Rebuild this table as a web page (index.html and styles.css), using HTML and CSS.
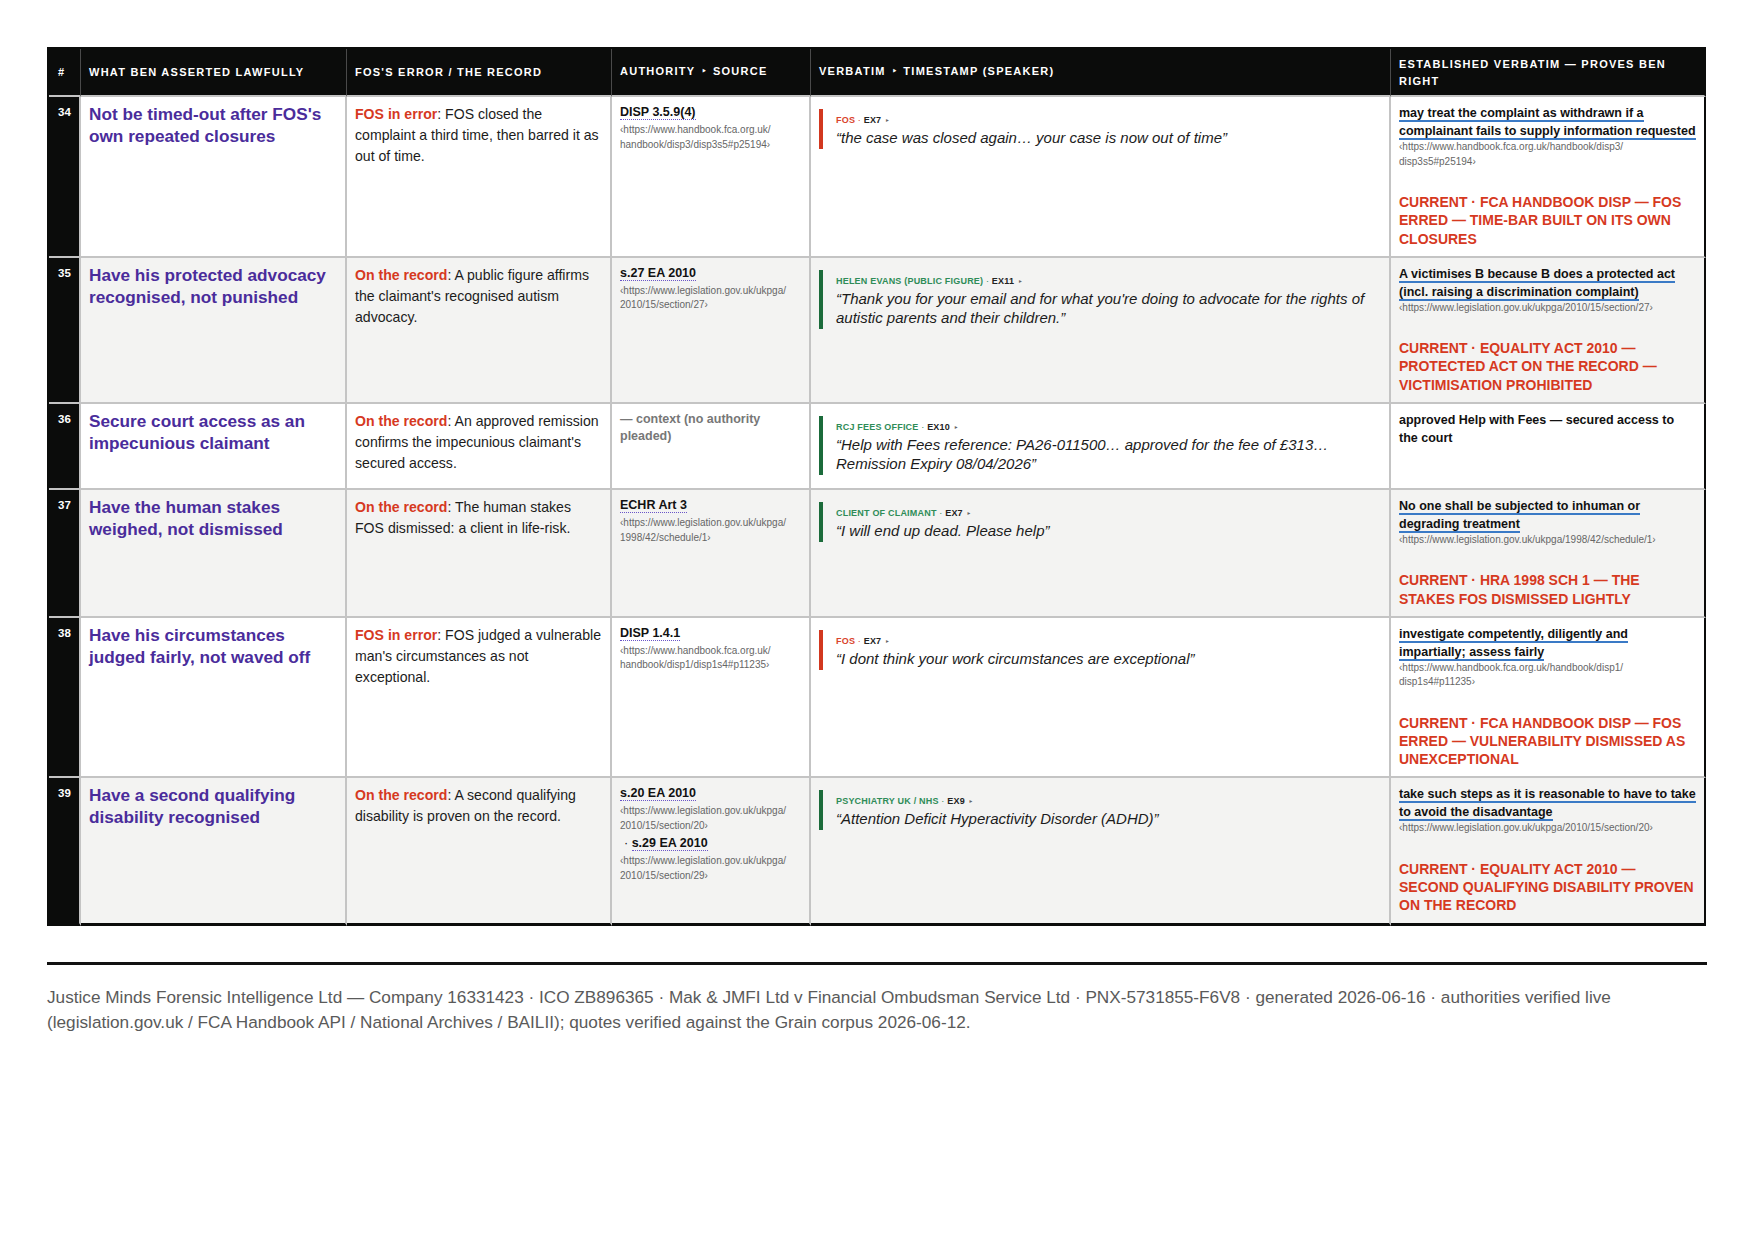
FILE: index.html
```html
<!DOCTYPE html>
<html lang="en">
<head>
<meta charset="utf-8">
<title>Established verbatim</title>
<link rel="stylesheet" href="styles.css">
</head>
<body>
<div class="page">
  <table class="sheet">
    <colgroup>
      <col class="c-num"><col class="c-claim"><col class="c-rec"><col class="c-auth"><col class="c-verb"><col class="c-est">
    </colgroup>
    <thead>
      <tr>
        <th class="h">#</th>
        <th class="h">What Ben asserted lawfully</th>
        <th class="h">FOS's error / the record</th>
        <th class="h">Authority <span class="tri">‣</span> Source</th>
        <th class="h">Verbatim <span class="tri">‣</span> Timestamp (speaker)</th>
        <th class="h">Established verbatim — proves Ben right</th>
      </tr>
    </thead>
    <tbody>
      <tr>
        <td class="num">34</td>
        <td class="claim">Not be timed-out after FOS's own repeated closures</td>
        <td class="rec"><span class="tag">FOS in error</span>: FOS closed the complaint a third time, then barred it as out of time.</td>
        <td class="auth">
          <div class="cite"><span class="cite-link">DISP 3.5.9(4)</span></div>
          <div class="cite-url">‹https://www.handbook.fca.org.uk/<br>handbook/disp3/disp3s5#p25194›</div>
        </td>
        <td class="verb">
          <div class="vb vb-red">
            <div class="vb-label"><span class="spk">FOS</span><span class="sep"> · </span><span class="ex">EX7</span> <span class="arr">‣</span></div>
            <div class="vb-q">“the case was closed again… your case is now out of time”</div>
          </div>
        </td>
        <td class="est">
          <span class="clause">may treat the complaint as withdrawn if a complainant fails to supply information requested</span>
          <div class="est-url">‹https://www.handbook.fca.org.uk/handbook/disp3/<br>disp3s5#p25194›</div>
          <div class="verdict">Current · FCA Handbook DISP — FOS erred — time-bar built on its own closures</div>
        </td>
      </tr>
      <tr>
        <td class="num">35</td>
        <td class="claim">Have his protected advocacy recognised, not punished</td>
        <td class="rec"><span class="tag">On the record</span>: A public figure affirms the claimant's recognised autism advocacy.</td>
        <td class="auth">
          <div class="cite"><span class="cite-link">s.27 EA 2010</span></div>
          <div class="cite-url">‹https://www.legislation.gov.uk/ukpga/<br>2010/15/section/27›</div>
        </td>
        <td class="verb">
          <div class="vb vb-green">
            <div class="vb-label"><span class="spk">Helen Evans (public figure)</span><span class="sep"> · </span><span class="ex">EX11</span> <span class="arr">‣</span></div>
            <div class="vb-q">“Thank you for your email and for what you're doing to advocate for the rights of autistic parents and their children.”</div>
          </div>
        </td>
        <td class="est">
          <span class="clause">A victimises B because B does a protected act (incl. raising a discrimination complaint)</span>
          <div class="est-url">‹https://www.legislation.gov.uk/ukpga/2010/15/section/27›</div>
          <div class="verdict">Current · Equality Act 2010 — protected act on the record — victimisation prohibited</div>
        </td>
      </tr>
      <tr>
        <td class="num">36</td>
        <td class="claim">Secure court access as an impecunious claimant</td>
        <td class="rec"><span class="tag">On the record</span>: An approved remission confirms the impecunious claimant's secured access.</td>
        <td class="auth">
          <div class="cite-none">— context (no authority pleaded)</div>
        </td>
        <td class="verb">
          <div class="vb vb-green">
            <div class="vb-label"><span class="spk">RCJ Fees Office</span><span class="sep"> · </span><span class="ex">EX10</span> <span class="arr">‣</span></div>
            <div class="vb-q">“Help with Fees reference: PA26-011500… approved for the fee of £313… Remission Expiry 08/04/2026”</div>
          </div>
        </td>
        <td class="est">
          <span class="clause clause-plain">approved Help with Fees — secured access to the court</span>
        </td>
      </tr>
      <tr>
        <td class="num">37</td>
        <td class="claim">Have the human stakes weighed, not dismissed</td>
        <td class="rec"><span class="tag">On the record</span>: The human stakes FOS dismissed: a client in life-risk.</td>
        <td class="auth">
          <div class="cite"><span class="cite-link">ECHR Art 3</span></div>
          <div class="cite-url">‹https://www.legislation.gov.uk/ukpga/<br>1998/42/schedule/1›</div>
        </td>
        <td class="verb">
          <div class="vb vb-green">
            <div class="vb-label"><span class="spk">Client of claimant</span><span class="sep"> · </span><span class="ex">EX7</span> <span class="arr">‣</span></div>
            <div class="vb-q">“I will end up dead. Please help”</div>
          </div>
        </td>
        <td class="est">
          <span class="clause">No one shall be subjected to inhuman or degrading treatment</span>
          <div class="est-url">‹https://www.legislation.gov.uk/ukpga/1998/42/schedule/1›</div>
          <div class="verdict">Current · HRA 1998 Sch 1 — the stakes FOS dismissed lightly</div>
        </td>
      </tr>
      <tr>
        <td class="num">38</td>
        <td class="claim">Have his circumstances judged fairly, not waved off</td>
        <td class="rec"><span class="tag">FOS in error</span>: FOS judged a vulnerable man's circumstances as not exceptional.</td>
        <td class="auth">
          <div class="cite"><span class="cite-link">DISP 1.4.1</span></div>
          <div class="cite-url">‹https://www.handbook.fca.org.uk/<br>handbook/disp1/disp1s4#p11235›</div>
        </td>
        <td class="verb">
          <div class="vb vb-red">
            <div class="vb-label"><span class="spk">FOS</span><span class="sep"> · </span><span class="ex">EX7</span> <span class="arr">‣</span></div>
            <div class="vb-q">“I dont think your work circumstances are exceptional”</div>
          </div>
        </td>
        <td class="est">
          <span class="clause">investigate competently, diligently and impartially; assess fairly</span>
          <div class="est-url">‹https://www.handbook.fca.org.uk/handbook/disp1/<br>disp1s4#p11235›</div>
          <div class="verdict">Current · FCA Handbook DISP — FOS erred — vulnerability dismissed as unexceptional</div>
        </td>
      </tr>
      <tr>
        <td class="num">39</td>
        <td class="claim">Have a second qualifying disability recognised</td>
        <td class="rec"><span class="tag">On the record</span>: A second qualifying disability is proven on the record.</td>
        <td class="auth">
          <div class="cite"><span class="cite-link">s.20 EA 2010</span></div>
          <div class="cite-url">‹https://www.legislation.gov.uk/ukpga/<br>2010/15/section/20›</div>
          <div class="cite cite-more">· <span class="cite-link">s.29 EA 2010</span></div>
          <div class="cite-url">‹https://www.legislation.gov.uk/ukpga/<br>2010/15/section/29›</div>
        </td>
        <td class="verb">
          <div class="vb vb-green">
            <div class="vb-label"><span class="spk">Psychiatry UK / NHS</span><span class="sep"> · </span><span class="ex">EX9</span> <span class="arr">‣</span></div>
            <div class="vb-q">“Attention Deficit Hyperactivity Disorder (ADHD)”</div>
          </div>
        </td>
        <td class="est">
          <span class="clause">take such steps as it is reasonable to have to take to avoid the disadvantage</span>
          <div class="est-url">‹https://www.legislation.gov.uk/ukpga/2010/15/section/20›</div>
          <div class="verdict">Current · Equality Act 2010 — second qualifying disability proven on the record</div>
        </td>
      </tr>
    </tbody>
  </table>

  <footer class="foot">Justice Minds Forensic Intelligence Ltd — Company 16331423 · ICO ZB896365 · Mak &amp; JMFI Ltd v Financial Ombudsman Service Ltd · PNX-5731855-F6V8 · generated 2026-06-16 · authorities verified live (legislation.gov.uk / FCA Handbook API / National Archives / BAILII); quotes verified against the Grain corpus 2026-06-12.</footer>
</div>
</body>
</html>
```
FILE: styles.css
```css
* { box-sizing: border-box; }

html, body {
  margin: 0;
  padding: 0;
  background: #ffffff;
}

body {
  font-family: "Liberation Sans", Arial, sans-serif;
  color: #1c1c1c;
}

.page {
  width: 1754px;
  padding: 47px 47px 0 47px;
}

/* ---------- table ---------- */
.sheet {
  width: 1659px;
  table-layout: fixed;
  border-collapse: separate;
  border-spacing: 0;
  border-top: 2px solid #0b0c0b;
  border-left: 2px solid #0b0c0b;
}

.c-num { width: 32px; }
.c-claim { width: 266px; }
.c-rec { width: 265px; }
.c-auth { width: 199px; }
.c-verb { width: 580px; }
.c-est { width: 315px; }

.h {
  background: #0b0c0b;
  color: #ffffff;
  font-size: 11px;
  font-weight: 700;
  letter-spacing: 1.25px;
  line-height: 16.7px;
  text-align: left;
  text-transform: uppercase;
  vertical-align: middle;
  padding: 7px 6px 6px 8px;
  border-right: 1px solid #4a4a4a;
  border-bottom: 2px solid #c4c4c4;
}

.h:first-child { padding-left: 9px; }
.h:last-child { border-right: 2px solid #0b0c0b; }

.tri {
  font-family: "DejaVu Sans", sans-serif;
  font-size: 8px;
  letter-spacing: 0;
  padding: 0 2px;
  position: relative;
  top: -1px;
}

td {
  vertical-align: top;
  padding: 7px 8px 8px 8px;
  border-right: 2px solid #c4c4c4;
  border-bottom: 2px solid #c4c4c4;
  background: #ffffff;
}

td:last-child { border-right-color: #0b0c0b; }

tbody tr:nth-child(even) td { background: #f3f3f2; }

tbody tr:last-child td { border-bottom: 3px solid #0b0c0b; }

tbody tr td.num {
  background: #0b0c0b;
  color: #ffffff;
  font-size: 11.5px;
  font-weight: 700;
  line-height: 16px;
  padding-left: 9px;
  padding-right: 2px;
}

/* column 2 */
.claim {
  font-size: 17.2px;
  font-weight: 700;
  line-height: 21.7px;
  color: #4a2c9b;
}

/* column 3 */
.rec {
  font-size: 14.1px;
  line-height: 21px;
  color: #1c1c1c;
}

.tag {
  color: #d6391f;
  font-weight: 700;
}

/* column 4 */
.cite {
  font-size: 12.5px;
  line-height: 17px;
  margin-bottom: 2px;
}

.cite-link {
  font-weight: 700;
  color: #111111;
  border-bottom: 1px dotted #6a55c8;
}

.cite-more {
  margin-top: 2px;
  padding-left: 4px;
  color: #111111;
}

.cite-url {
  font-size: 10px;
  line-height: 14.5px;
  color: #666666;
  white-space: nowrap;
}

.cite-none {
  font-size: 12.5px;
  font-weight: 700;
  line-height: 17px;
  color: #777777;
}

/* column 5 */
.vb {
  margin: 5px 0;
  border-left: 4px solid #d2381f;
  padding: 4px 0 2px 13px;
}

.vb-green { border-left-color: #1b6b3b; }

.vb-label {
  font-size: 9px;
  font-weight: 700;
  line-height: 14px;
  letter-spacing: 0.2px;
  text-transform: uppercase;
  color: #222222;
}

.vb-red .spk, .vb-red .sep { color: #d9442c; }
.vb-green .spk, .vb-green .sep { color: #2f8c58; }

.sep { font-weight: 400; }
.ex { color: #222222; }

.arr {
  font-family: "DejaVu Sans", sans-serif;
  font-size: 7px;
  color: #666666;
  padding-left: 1px;
}

.vb-q {
  font-size: 15px;
  font-style: italic;
  line-height: 19px;
  color: #1c1c1c;
}

/* column 6 */
td.est {
  font-size: 12.5px;
  line-height: 18px;
}

.clause {
  font-weight: 700;
  color: #111111;
  border-bottom: 2px solid #3a7ac6;
}

.clause-plain { border-bottom: 0; }

.est-url {
  font-size: 10px;
  line-height: 14.3px;
  color: #666666;
  white-space: nowrap;
}

.verdict {
  margin-top: 24px;
  font-size: 14px;
  font-weight: 700;
  line-height: 18.3px;
  color: #d6391f;
  text-transform: uppercase;
}

/* ---------- footer ---------- */
.foot {
  margin-top: 36px;
  border-top: 3px solid #111111;
  padding-top: 20px;
  font-size: 17.2px;
  line-height: 25px;
  color: #5a5a5a;
}
```
